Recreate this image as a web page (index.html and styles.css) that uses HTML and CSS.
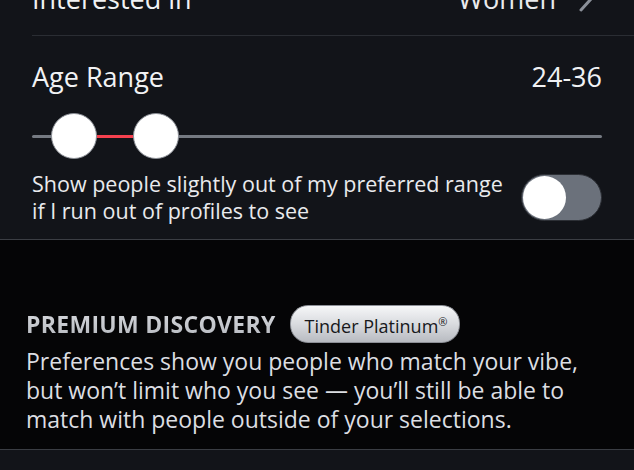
FILE: index.html
```html
<!DOCTYPE html>
<html lang="en">
<head>
  <meta charset="UTF-8">
  <meta name="viewport" content="width=device-width, initial-scale=1.0">
  <title>Discovery Settings</title>
  <link rel="stylesheet" href="styles.css">
</head>
<body>
  <section class="settings">
    <div class="interested">
      <span class="label">Interested in</span>
      <span class="value">Women
        <svg class="chevron" width="16" height="26" viewBox="0 0 16 26"><path d="M3 2l10 11-10 11" fill="none" stroke="#8b9099" stroke-width="3" stroke-linecap="round" stroke-linejoin="round"/></svg>
      </span>
    </div>

    <div class="age">
      <div class="age-head">
        <span>Age Range</span>
        <span>24-36</span>
      </div>
      <div class="slider">
        <div class="track"></div>
        <div class="track-fill"></div>
        <div class="thumb thumb-min"></div>
        <div class="thumb thumb-max"></div>
      </div>
      <div class="toggle-row">
        <p>Show people slightly out of my preferred range<br>if I run out of profiles to see</p>
        <div class="switch"><div class="knob"></div></div>
      </div>
    </div>
  </section>

  <section class="premium">
    <div class="premium-head">
      <h3>PREMIUM DISCOVERY</h3>
      <span class="badge">Tinder Platinum<sup>®</sup></span>
    </div>
    <p>Preferences show you people who match your vibe,<br>but won’t limit who you see — you’ll still be able to<br>match with people outside of your selections.</p>
  </section>

  <section class="next"></section>
</body>
</html>
```

FILE: styles.css
```css
:root {
  --card: #121419;
  --text: #f1f2f4;
  --line: #2a2d33;
  --red: #f5414f;
}

* {
  margin: 0;
  padding: 0;
  box-sizing: border-box;
}

body {
  font-family: 'Open Sans', 'Lato', sans-serif;
  background: #050506;
  color: var(--text);
  width: 634px;
  height: 470px;
  overflow: hidden;
}

.settings {
  background: var(--card);
  border-bottom: 1px solid #3b3e44;
}

/* first row sits half above the fold */
.interested {
  display: flex;
  justify-content: space-between;
  align-items: center;
  margin: -38px 0 0 32px;
  padding: 20px 40px 19px 0;
  border-bottom: 1px solid var(--line);
  font-size: 27px;
  line-height: 34px;
}

.interested .value {
  display: flex;
  align-items: center;
  gap: 22px;
  color: #e9eaed;
}

.age {
  padding: 24px 32px 15px;
}

.age-head {
  display: flex;
  justify-content: space-between;
  font-size: 27px;
  line-height: 34px;
}

.slider {
  position: relative;
  height: 46px;
  margin-top: 19px;
}

.track {
  position: absolute;
  left: 0;
  right: 0;
  top: 22px;
  height: 3px;
  border-radius: 2px;
  background: #757a82;
}

.track-fill {
  position: absolute;
  left: 42px;
  width: 82px;
  top: 22px;
  height: 3px;
  background: var(--red);
}

.thumb {
  position: absolute;
  top: 0;
  width: 46px;
  height: 46px;
  border-radius: 50%;
  background: #fff;
  border: 1px solid #8a8e95;
}

.thumb-min { left: 19px; }
.thumb-max { left: 101px; }

.toggle-row {
  display: flex;
  justify-content: space-between;
  align-items: center;
  margin-top: 11px;
}

.toggle-row p {
  font-size: 21.5px;
  line-height: 27px;
  color: #e9eaed;
}

.switch {
  width: 81px;
  height: 47px;
  border-radius: 24px;
  background: #6b717b;
  border: 1px solid #2c2f35;
  padding: 1px;
}

.knob {
  width: 43px;
  height: 43px;
  border-radius: 50%;
  background: #fff;
}

.premium {
  padding: 67px 26px 15px;
  border-bottom: 1px solid #3a3d43;
}

.premium-head {
  display: flex;
  align-items: center;
  gap: 14px;
  height: 33px;
}

.premium h3 {
  font-size: 23px;
  font-weight: 700;
  letter-spacing: 0.3px;
  background: linear-gradient(180deg, #dadce0 0%, #b4b7bd 100%);
  -webkit-background-clip: text;
  background-clip: text;
  color: transparent;
}

.badge {
  font-size: 18px;
  line-height: 21px;
  color: #17181b;
  padding: 5px 12px 5px 14px;
  border-radius: 18px;
  background: linear-gradient(180deg, #f6f7f8 0%, #d9dbdf 50%, #b8bbc1 100%);
  border: 1px solid #8d9097;
}

.badge sup {
  font-size: 11px;
}

.premium p {
  margin-top: 7px;
  font-size: 23px;
  line-height: 29px;
  color: #dcdee2;
}

.next {
  background: var(--card);
  height: 40px;
}
```
